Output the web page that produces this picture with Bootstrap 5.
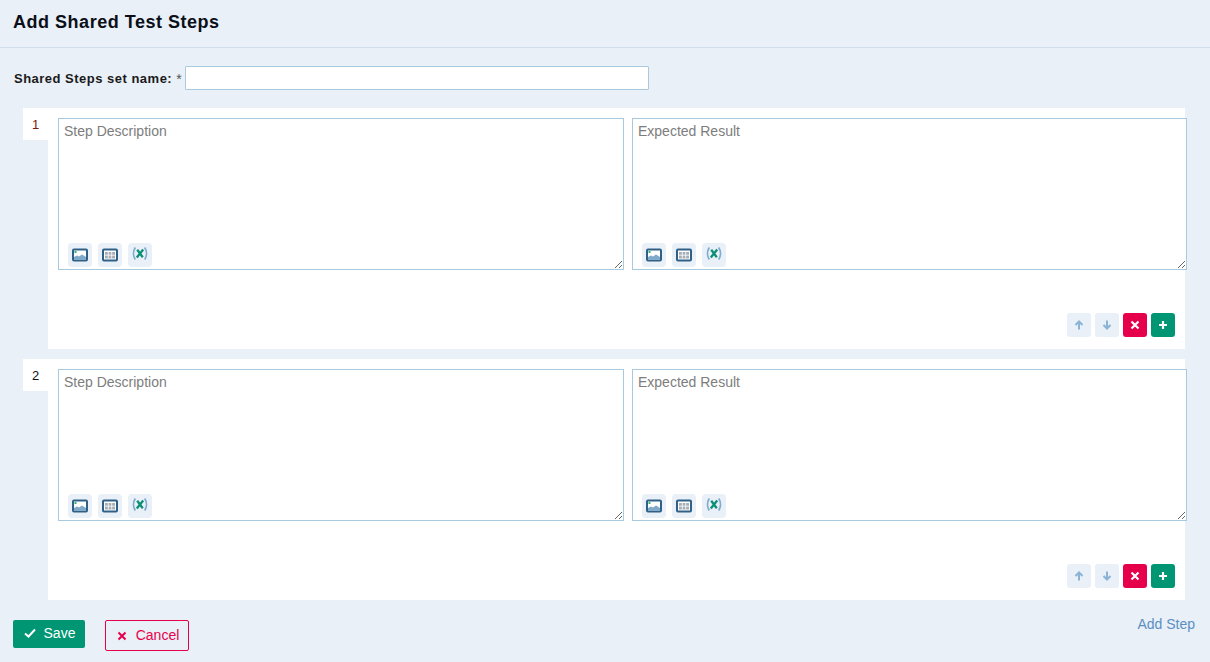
<!DOCTYPE html>
<html lang="en">
<head>
<meta charset="utf-8">
<title>Add Shared Test Steps</title>
<link href="https://cdn.jsdelivr.net/npm/bootstrap@5.3.0/dist/css/bootstrap.min.css" rel="stylesheet">
<style>
html,body{height:662px;overflow:hidden}
body{background:#e9f0f7;font-family:"Liberation Sans",Arial,sans-serif;font-size:14px;color:#111}
.page-head{height:48px;border-bottom:1px solid #cfdfea;padding:0 13px}
.page-head h1{font-size:18px;font-weight:700;margin:0;line-height:44px;letter-spacing:.52px;color:#0b0f19}
.name-row{padding:18px 14px 0;height:60px}
.name-row label{font-size:13px;font-weight:700;letter-spacing:.49px;margin:0;color:#1a1a1a;line-height:26px}
.req{color:#555;margin:0 3px 0 4px;font-size:14px;line-height:26px}
.name-input{width:464px;height:24px;border:1px solid #a9c9df;background:#fff;border-radius:1px;padding:0 6px;outline:0}
.step-row{margin-left:23px;width:1162px;margin-bottom:10px;height:241px}
.step-no{width:25px;height:32px;background:#fff;text-align:center;line-height:34px;flex:none;font-size:13px;color:#111}
.first-no{color:#7a1a10}
.step-body{flex:1;min-width:0;background:#fff;padding:10px 0 0 10px;position:relative}
.editor{position:relative;height:152px;flex:none}
.ed-a{width:566px;margin-right:8px}
.ed-b{width:555px;margin-right:-2px}
.editor textarea{display:block;width:100%;height:152px;border:1px solid #a9c9df;border-radius:0;padding:4px 5px;font:14px/1.2 "Liberation Sans",Arial,sans-serif;outline:0;background:#fff}
.editor textarea::placeholder{color:#7d7d7d;opacity:1}
.tools{position:absolute;left:10px;bottom:3px;gap:6px}
.tool{width:24px;height:24px;border:0;padding:0;background:#e9f0f7;border-radius:4px;display:flex;align-items:center;justify-content:center}
.step-actions{position:absolute;right:10px;bottom:12px;gap:4px}
.act{width:24px;height:24px;border:0;padding:0;border-radius:3px;display:flex;align-items:center;justify-content:center}
.act-move{background:#e9f0f7}
.act-del{background:#e6004c}
.act-add{background:#009673}
.foot{padding:10px 13px 0 13px}
.btn-save{width:72px;height:28px;background:#009673;color:#fff;border:0;border-radius:2px;font-size:14px;padding:0 0 2px 1px;display:flex;align-items:center;justify-content:center;gap:8px}
.btn-cancel{width:84px;height:31px;background:transparent;color:#e6004c;border:1px solid #e6004c;border-radius:2px;font-size:14px;padding:0 0 0 2px;display:flex;align-items:center;justify-content:center;gap:9px;margin-left:20px}
.add-step{color:#5b8fc2;text-decoration:none;font-size:14px;margin-left:auto;margin-right:2px;line-height:1;margin-top:-3px}
.sprite{position:absolute;width:0;height:0}
</style>
</head>
<body>
<svg class="sprite" aria-hidden="true">
  <symbol id="i-img" viewBox="0 0 16 14"><rect x="1" y="1.500" width="14" height="11" rx="1" fill="#fff" stroke="#2f6088" stroke-width="2"/><rect x="2.500" y="3" width="2" height="2" fill="#2fb573"/><path d="M2 11.500V9l3-1.500 2 1L10 6.500l4 2.500v2.500z" fill="#7fa8c9"/></symbol>
  <symbol id="i-tbl" viewBox="0 0 16 14"><rect x="1" y="1.500" width="14" height="11" rx="1" fill="#fff" stroke="#2f6088" stroke-width="2"/><path d="M3 4h10v6.500H3z" fill="#a5adb5"/><path d="M6.300 4v6.500M9.700 4v6.500M3 7.200h10" stroke="#fff" stroke-width=".8"/></symbol>
  <symbol id="i-var" viewBox="0 1 16 16"><path d="M3.300 1.500C1 5 1 10 3.300 13.500M12.700 1.500c2.300 3.500 2.300 8.500 0 12" fill="none" stroke="#7fabd0" stroke-width="1.800"/><path d="M4.800 11.500l6.400-8M5.200 3.800l5.600 7.400" stroke="#0d8f77" stroke-width="2.300"/></symbol>
</svg>
<div class="page-head"><h1>Add Shared Test Steps</h1></div>
<div class="name-row d-flex align-items-start">
  <label for="setname">Shared Steps set name:</label><span class="req">*</span>
  <input id="setname" class="name-input" type="text">
</div>

<div class="step-row d-flex">
  <div class="step-no first-no">1</div>
  <div class="step-body">
    <div class="d-flex">
      <div class="editor ed-a">
        <textarea placeholder="Step Description"></textarea>
        <div class="tools d-flex">
          <button class="tool" type="button"><svg width="16" height="14"><use href="#i-img"/></svg></button>
          <button class="tool" type="button"><svg width="16" height="14"><use href="#i-tbl"/></svg></button>
          <button class="tool" type="button"><svg width="16" height="16"><use href="#i-var"/></svg></button>
        </div>
      </div>
      <div class="editor ed-b">
        <textarea placeholder="Expected Result"></textarea>
        <div class="tools d-flex">
          <button class="tool" type="button"><svg width="16" height="14"><use href="#i-img"/></svg></button>
          <button class="tool" type="button"><svg width="16" height="14"><use href="#i-tbl"/></svg></button>
          <button class="tool" type="button"><svg width="16" height="16"><use href="#i-var"/></svg></button>
        </div>
      </div>
    </div>
    <div class="step-actions d-flex">
      <button class="act act-move" type="button"><svg width="10" height="10" viewBox="0 0 10 10"><path d="M5 9.500V1.500M1.500 5L5 1.500 8.500 5" fill="none" stroke="#8ab3d6" stroke-width="2"/></svg></button>
      <button class="act act-move" type="button"><svg width="10" height="10" viewBox="0 0 10 10"><path d="M5 .5v8M1.500 5L5 8.500 8.500 5" fill="none" stroke="#8ab3d6" stroke-width="2"/></svg></button>
      <button class="act act-del" type="button"><svg width="10" height="10" viewBox="0 0 10 10"><path d="M1.500 1.500l7 7M8.500 1.500l-7 7" stroke="#fff" stroke-width="2.200"/></svg></button>
      <button class="act act-add" type="button"><svg width="10" height="10" viewBox="0 0 10 10"><path d="M5 1v8M1 5h8" stroke="#fff" stroke-width="2.200"/></svg></button>
    </div>
  </div>
</div>

<div class="step-row d-flex">
  <div class="step-no">2</div>
  <div class="step-body">
    <div class="d-flex">
      <div class="editor ed-a">
        <textarea placeholder="Step Description"></textarea>
        <div class="tools d-flex">
          <button class="tool" type="button"><svg width="16" height="14"><use href="#i-img"/></svg></button>
          <button class="tool" type="button"><svg width="16" height="14"><use href="#i-tbl"/></svg></button>
          <button class="tool" type="button"><svg width="16" height="16"><use href="#i-var"/></svg></button>
        </div>
      </div>
      <div class="editor ed-b">
        <textarea placeholder="Expected Result"></textarea>
        <div class="tools d-flex">
          <button class="tool" type="button"><svg width="16" height="14"><use href="#i-img"/></svg></button>
          <button class="tool" type="button"><svg width="16" height="14"><use href="#i-tbl"/></svg></button>
          <button class="tool" type="button"><svg width="16" height="16"><use href="#i-var"/></svg></button>
        </div>
      </div>
    </div>
    <div class="step-actions d-flex">
      <button class="act act-move" type="button"><svg width="10" height="10" viewBox="0 0 10 10"><path d="M5 9.500V1.500M1.500 5L5 1.500 8.500 5" fill="none" stroke="#8ab3d6" stroke-width="2"/></svg></button>
      <button class="act act-move" type="button"><svg width="10" height="10" viewBox="0 0 10 10"><path d="M5 .5v8M1.500 5L5 8.500 8.500 5" fill="none" stroke="#8ab3d6" stroke-width="2"/></svg></button>
      <button class="act act-del" type="button"><svg width="10" height="10" viewBox="0 0 10 10"><path d="M1.500 1.500l7 7M8.500 1.500l-7 7" stroke="#fff" stroke-width="2.200"/></svg></button>
      <button class="act act-add" type="button"><svg width="10" height="10" viewBox="0 0 10 10"><path d="M5 1v8M1 5h8" stroke="#fff" stroke-width="2.200"/></svg></button>
    </div>
  </div>
</div>

<div class="foot d-flex align-items-start">
  <button class="btn-save" type="button"><svg width="12" height="10" viewBox="0 0 12 10"><path d="M1 5.500l3.500 3L11 1.500" fill="none" stroke="#fff" stroke-width="2"/></svg>Save</button>
  <button class="btn-cancel" type="button"><svg width="10" height="10" viewBox="0 0 10 10"><path d="M1.500 1.500l7 7M8.500 1.500l-7 7" stroke="#e6004c" stroke-width="2"/></svg>Cancel</button>
  <a class="add-step" href="#">Add Step</a>
</div>
</body>
</html>
